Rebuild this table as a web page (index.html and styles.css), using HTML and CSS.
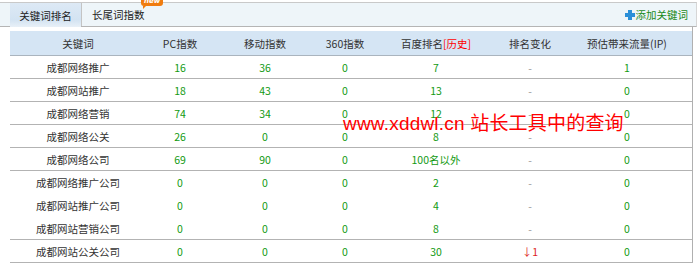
FILE: index.html
```html
<!DOCTYPE html>
<html lang="zh-CN">
<head>
<meta charset="utf-8">
<link rel="stylesheet" href="styles.css">
</head>
<body>
<div class="page">
  <div class="tabs">
    <div class="tab active">关键词排名</div>
    <div class="tab second">长尾词指数<span class="badge">new</span></div>
    <a class="add"><svg class="plus" width="10" height="10" viewBox="0 0 10 10"><rect x="3" y="0" width="4" height="10" fill="#2b8fd8"/><rect x="0" y="3" width="10" height="4" fill="#2b8fd8"/></svg>添加关键词</a>
  </div>
  <div class="panel">
    <div class="row head">
      <div>关键词</div><div>PC指数</div><div>移动指数</div><div>360指数</div><div>百度排名<span class="red">[历史]</span></div><div>排名变化</div><div>预估带来流量(IP)</div>
    </div>
    <div class="row">
      <div class="kw">成都网络推广</div><div class="g">16</div><div class="g">36</div><div class="g">0</div><div class="g">7</div><div class="dash">-</div><div class="g">1</div>
    </div>
    <div class="row">
      <div class="kw">成都网站推广</div><div class="g">18</div><div class="g">43</div><div class="g">0</div><div class="g">13</div><div class="dash">-</div><div class="g">0</div>
    </div>
    <div class="row">
      <div class="kw">成都网络营销</div><div class="g">74</div><div class="g">34</div><div class="g">0</div><div class="g">12</div><div class="dash">-</div><div class="g">0</div>
    </div>
    <div class="row">
      <div class="kw">成都网络公关</div><div class="g">26</div><div class="g">0</div><div class="g">0</div><div class="g">8</div><div class="dash">-</div><div class="g">0</div>
    </div>
    <div class="row">
      <div class="kw">成都网络公司</div><div class="g">69</div><div class="g">90</div><div class="g">0</div><div class="g">100名以外</div><div class="dash">-</div><div class="g">0</div>
    </div>
    <div class="row noline">
      <div class="kw">成都网络推广公司</div><div class="g">0</div><div class="g">0</div><div class="g">0</div><div class="g">2</div><div class="dash">-</div><div class="g">0</div>
    </div>
    <div class="row noline">
      <div class="kw">成都网站推广公司</div><div class="g">0</div><div class="g">0</div><div class="g">0</div><div class="g">4</div><div class="dash">-</div><div class="g">0</div>
    </div>
    <div class="row">
      <div class="kw">成都网站营销公司</div><div class="g">0</div><div class="g">0</div><div class="g">0</div><div class="g">8</div><div class="dash">-</div><div class="g">0</div>
    </div>
    <div class="row">
      <div class="kw">成都网站公关公司</div><div class="g">0</div><div class="g">0</div><div class="g">0</div><div class="g">30</div><div class="down">↓1</div><div class="g">0</div>
    </div>
  </div>
  <div class="watermark">www.xddwl.cn 站长工具中的查询</div>
</div>
</body>
</html>
```
FILE: styles.css
```css
html, body {
  margin: 0;
  padding: 0;
  background: #ffffff;
}
body {
  font-family: "Noto Sans CJK SC", "Liberation Sans", sans-serif;
  font-size: 10.5px;
  color: #333333;
}
.page {
  position: relative;
  width: 700px;
  height: 271px;
}
.tabs {
  margin-top: 2px;
  width: 696px;
  height: 23px;
  display: flex;
  align-items: stretch;
  background: #eef5f9;
  border-top: 1px solid #c9c9c9;
  border-bottom: 1px solid #b5b5b5;
  border-right: 1px solid #d6d6d6;
}
.tab {
  display: flex;
  align-items: center;
  color: #222222;
}
.tab.active {
  margin-left: 10px;
  width: 71px;
  justify-content: center;
  height: 24px;
  margin-bottom: -1px;
  background: linear-gradient(#dde9f5, #d3e3f2 70%, #e8f0f7);
}
.tab.second {
  position: relative;
  border-left: 1px solid #c4c4c4;
  padding-left: 10px;
}
.badge {
  position: absolute;
  left: 59px;
  top: -8px;
  height: 11px;
  padding: 0 3px;
  border-radius: 3px;
  background: #f07c10;
  color: #ffffff;
  font-family: "DejaVu Sans", sans-serif;
  font-size: 7px;
  font-weight: bold;
  font-style: italic;
  line-height: 13px;
}
.badge::after {
  content: "";
  position: absolute;
  left: 2px;
  bottom: -3px;
  border-left: 3px solid #f07c10;
  border-bottom: 3px solid transparent;
}
.add {
  margin-left: auto;
  margin-right: 8px;
  display: flex;
  align-items: center;
  color: #1a8a1a;
  font-size: 10.5px;
}
.plus {
  margin-right: 1px;
}
.panel {
  margin-left: 10px;
  width: 682px;
  padding-top: 4px;
  border-right: 1px solid #b0b0b0;
}
.row {
  display: grid;
  grid-template-columns: 136px 68px 102px 58px 124px 64px 130px;
  height: 22px;
  align-items: center;
  border-bottom: 1px solid #b3b3b3;
}
.row > div {
  text-align: center;
  white-space: nowrap;
}
.row.head {
  height: 24px;
  background: #d5e5f4;
  border-bottom: 1px solid #aab4be;
  color: #333333;
}
.row.noline {
  border-bottom-color: transparent;
}
.red {
  color: #ff0000;
}
.g {
  color: #129a12;
}
.dash {
  color: #9a9a9a;
}
.down {
  color: #dd1f1f;
}
.kw {
  color: #333333;
}
.watermark {
  position: absolute;
  left: 343px;
  top: 112px;
  font-family: "Liberation Sans", "Noto Sans CJK SC", sans-serif;
  font-size: 19px;
  line-height: 19px;
  color: #ff0000;
  white-space: nowrap;
  letter-spacing: 0.2px;
}
```
